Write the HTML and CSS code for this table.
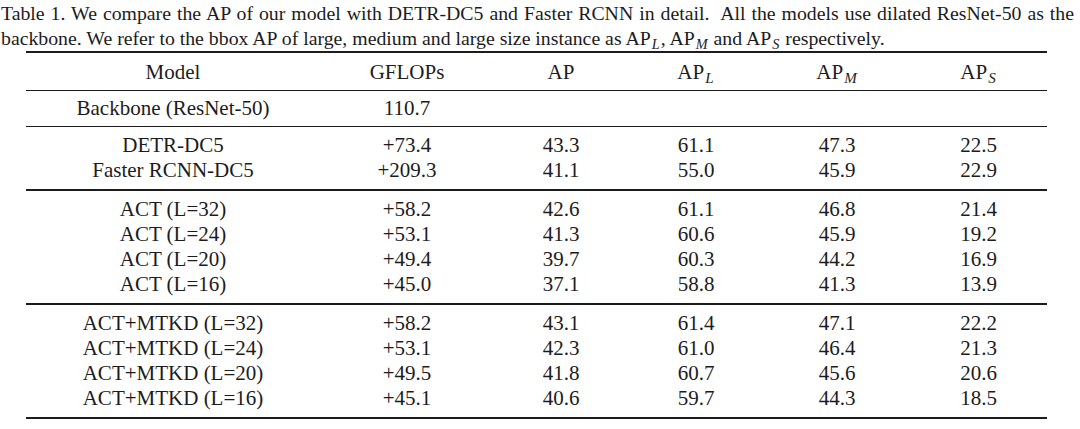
FILE: index.html
```html
<!DOCTYPE html>
<html>
<head>
<meta charset="utf-8">
<link rel="stylesheet" href="styles.css">
</head>
<body>
<div class="page">
<p class="caption">Table 1. We compare the AP of our model with DETR-DC5 and Faster RCNN in detail.&nbsp; All the models use dilated ResNet-50 as the backbone. We refer to the bbox AP of large, medium and large size instance as AP<sub>L</sub>, AP<sub>M</sub> and AP<sub>S</sub> respectively.</p>
<table class="results">
<colgroup>
<col class="c1"><col class="c2"><col class="c3"><col class="c4"><col class="c5"><col class="c6">
</colgroup>
<thead>
<tr><th>Model</th><th>GFLOPs</th><th>AP</th><th>AP<sub>L</sub></th><th>AP<sub>M</sub></th><th>AP<sub>S</sub></th></tr>
</thead>
<tbody class="single">
<tr><td>Backbone (ResNet-50)</td><td>110.7</td><td></td><td></td><td></td><td></td></tr>
</tbody>
<tbody class="group thin">
<tr><td>DETR-DC5</td><td>+73.4</td><td>43.3</td><td>61.1</td><td>47.3</td><td>22.5</td></tr>
<tr><td>Faster RCNN-DC5</td><td>+209.3</td><td>41.1</td><td>55.0</td><td>45.9</td><td>22.9</td></tr>
</tbody>
<tbody class="group">
<tr><td>ACT (L=32)</td><td>+58.2</td><td>42.6</td><td>61.1</td><td>46.8</td><td>21.4</td></tr>
<tr><td>ACT (L=24)</td><td>+53.1</td><td>41.3</td><td>60.6</td><td>45.9</td><td>19.2</td></tr>
<tr><td>ACT (L=20)</td><td>+49.4</td><td>39.7</td><td>60.3</td><td>44.2</td><td>16.9</td></tr>
<tr><td>ACT (L=16)</td><td>+45.0</td><td>37.1</td><td>58.8</td><td>41.3</td><td>13.9</td></tr>
</tbody>
<tbody class="group">
<tr><td>ACT+MTKD (L=32)</td><td>+58.2</td><td>43.1</td><td>61.4</td><td>47.1</td><td>22.2</td></tr>
<tr><td>ACT+MTKD (L=24)</td><td>+53.1</td><td>42.3</td><td>61.0</td><td>46.4</td><td>21.3</td></tr>
<tr><td>ACT+MTKD (L=20)</td><td>+49.5</td><td>41.8</td><td>60.7</td><td>45.6</td><td>20.6</td></tr>
<tr><td>ACT+MTKD (L=16)</td><td>+45.1</td><td>40.6</td><td>59.7</td><td>44.3</td><td>18.5</td></tr>
</tbody>
</table>
</div>
</body>
</html>
```
FILE: styles.css
```css
html, body {
  margin: 0;
  padding: 0;
  background: #ffffff;
}
.page {
  font-family: "Liberation Serif", "Times New Roman", serif;
  color: #1c1c1c;
  padding: 0 6px 0 1px;
}
.caption {
  margin: 0;
  font-size: 19.8px;
  line-height: 25px;
  text-align: justify;
  padding-top: 1px;
}
sub {
  font-style: italic;
  font-size: 0.72em;
  vertical-align: baseline;
  position: relative;
  top: 0.28em;
  line-height: 1;
  padding-left: 1px;
  padding-right: 1px;
}
.results {
  margin-top: 0;
  margin-left: 25px;
  width: 1021px;
  border-collapse: collapse;
  table-layout: fixed;
  font-size: 21px;
  border-top: 2px solid #1c1c1c;
  border-bottom: 2px solid #1c1c1c;
}
.c1 { width: 294px; }
.c2 { width: 174px; }
.c3 { width: 134px; }
.c4 { width: 136px; }
.c5 { width: 146px; }
.c6 { width: 137px; }
.results th, .results td {
  text-align: center;
  font-weight: normal;
  padding: 0;
  height: 25px;
  line-height: 25px;
  white-space: nowrap;
}
.results thead th {
  height: 36px;
  padding-top: 1px;
}
.results tbody.single td {
  height: 35px;
  border-top: 1px solid #1c1c1c;
}
.results tbody.group tr:first-child td {
  padding-top: 6px;
  border-top: 2px solid #1c1c1c;
}
.results tbody.group.thin tr:first-child td {
  border-top: 1px solid #1c1c1c;
}
.results tbody.group tr:last-child td {
  padding-bottom: 6px;
}
```
